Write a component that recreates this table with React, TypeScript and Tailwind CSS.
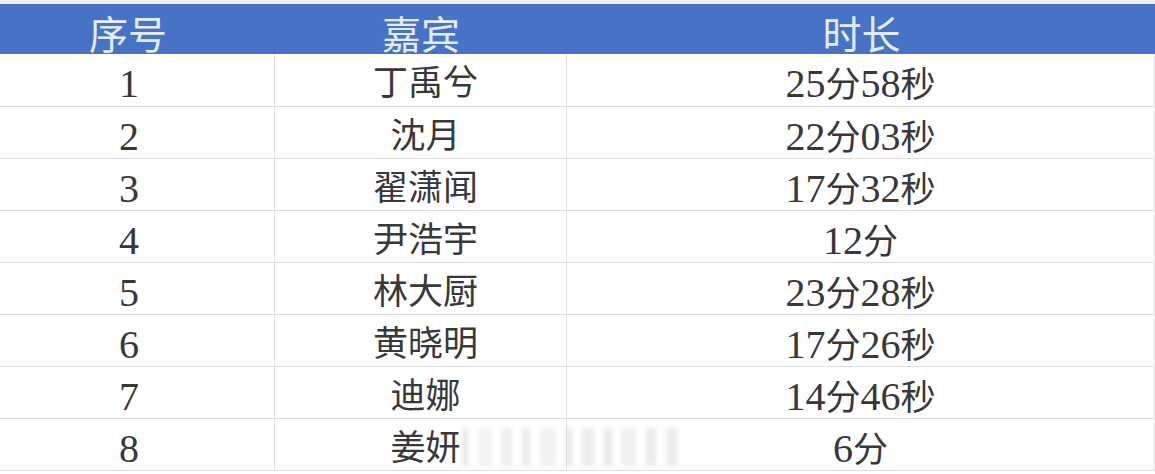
import React from "react";

const rows: [string, string, string][] = [
  ["1", "丁禹兮", "25分58秒"],
  ["2", "沈月", "22分03秒"],
  ["3", "翟潇闻", "17分32秒"],
  ["4", "尹浩宇", "12分"],
  ["5", "林大厨", "23分28秒"],
  ["6", "黄晓明", "17分26秒"],
  ["7", "迪娜", "14分46秒"],
  ["8", "姜妍", "6分"],
];

const bodyFont = { fontFamily: '"Liberation Serif", "Noto Sans CJK SC", serif' };
const headFont = { fontFamily: '"Noto Sans CJK SC", "Noto Sans", sans-serif' };

function Mixed({ text }: { text: string }) {
  const parts = text.match(/[0-9]+|[^0-9]+/g) || [];
  return (
    <span className="flex items-baseline">
      {parts.map((p, i) =>
        /[0-9]/.test(p) ? (
          <span key={i} className="text-[40px]">
            {p}
          </span>
        ) : (
          <span key={i} className="text-[35px]">
            {p}
          </span>
        )
      )}
    </span>
  );
}

export default function App() {
  return (
    <div className="w-[1155px] h-[474px] bg-white overflow-hidden relative">
      <div className="h-[4px] bg-[#eef1f8]" />
      <div
        className="grid grid-cols-[274px_292px_1fr] h-[50px] bg-[#4773c6] text-[#e3ecfb] text-[39px] leading-none"
        style={headFont}
      >
        <div className="flex items-center justify-center pt-[6px] pr-[18px]">序号</div>
        <div className="flex items-center justify-center pt-[6px] pl-[2px]">嘉宾</div>
        <div className="flex items-center justify-center pt-[6px] pl-[2px]">时长</div>
      </div>
      <div className="border-r border-[#e4e4e4]">
        {rows.map(([n, name, t], i) => (
          <div
            key={n}
            className={`grid grid-cols-[274px_292px_1fr] ${i === 0 ? "h-[53px]" : "h-[52px]"} border-b border-[#dedede] text-[#383838] leading-none`}
            style={bodyFont}
          >
            <div className="flex items-center justify-center pt-[8px] pr-[16px] text-[40px]">{n}</div>
            <div className="flex items-center justify-center pt-[7px] pl-[10px] border-l border-[#e2e2e2] text-[35px]">
              {name}
            </div>
            <div className="flex items-center justify-center pt-[8px] border-l border-[#e2e2e2]">
              <Mixed text={t} />
            </div>
          </div>
        ))}
      </div>
      <div className="absolute left-[462px] top-[428px] w-[228px] h-[38px] flex gap-[10px] items-stretch blur-[2px] opacity-40">
        <div className="w-[6px] bg-[#c8c8c8]" />
        <div className="w-[14px] bg-[#e2e2e2]" />
        <div className="w-[10px] bg-[#d6d6d6]" />
        <div className="w-[8px] bg-[#cfcfcf]" />
        <div className="w-[16px] bg-[#e0e0e0]" />
        <div className="w-[6px] bg-[#c4c4c4]" />
        <div className="w-[12px] bg-[#d0d0d0]" />
        <div className="w-[8px] bg-[#c8c8c8]" />
        <div className="w-[14px] bg-[#d8d8d8]" />
        <div className="w-[10px] bg-[#cccccc]" />
        <div className="w-[12px] bg-[#d4d4d4]" />
      </div>
    </div>
  );
}
